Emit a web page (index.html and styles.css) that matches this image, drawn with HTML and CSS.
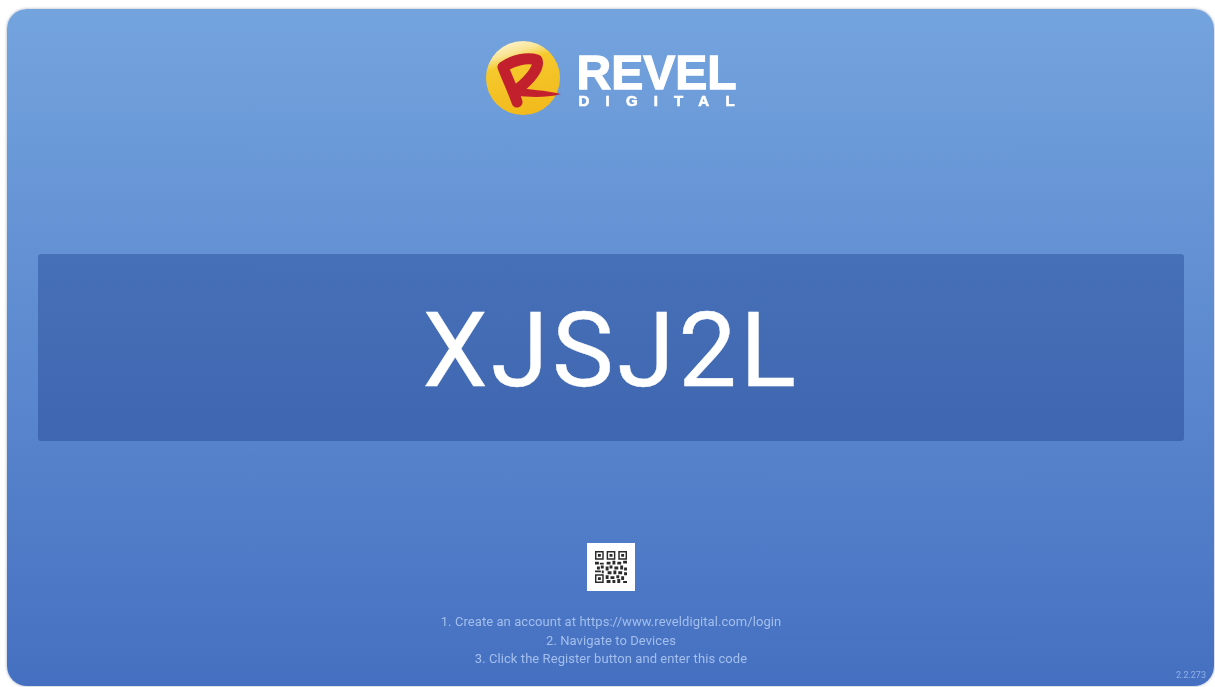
FILE: index.html
```html
<!DOCTYPE html>
<html lang="en">
<head>
  <meta charset="UTF-8">
  <meta name="viewport" content="width=device-width, initial-scale=1.0">
  <title>Revel Digital</title>
  <link rel="stylesheet" href="styles.css">
</head>
<body>
  <div class="screen">
    <div class="logo">
      <svg class="logo-mark" width="78" height="78" viewBox="0 0 78 78">
        <defs>
          <linearGradient id="ball" x1="0.3" y1="0" x2="0.6" y2="1">
            <stop offset="0" stop-color="#fdf3cc"/>
            <stop offset="0.16" stop-color="#f9e596"/>
            <stop offset="0.3" stop-color="#f5c92c"/>
            <stop offset="1" stop-color="#f2b91c"/>
          </linearGradient>
        </defs>
        <circle cx="38" cy="38" r="37" fill="url(#ball)"/>
        <path d="M32 62 C28 50 22 38 18 27 C28 20 42 17 52 20 C55 28 44 40 33 49" fill="none" stroke="#c3202e" stroke-width="11" stroke-linecap="round" stroke-linejoin="round"/>
        <path d="M30 47 C44 50 60 50 76 54 C62 58 44 57 32 56 Z" fill="#c3202e"/>
      </svg>
      <div class="logo-text">
        <div class="logo-name">REVEL</div>
        <div class="logo-sub">DIGITAL</div>
      </div>
    </div>

    <div class="code-band">
      <div class="code">XJSJ2L</div>
    </div>

    <div class="qr">
      <svg width="32" height="32" viewBox="0 0 33 33">
        <path fill="#2a2a2a" d="M0 0h9v9h-9zM12 0h9v9h-9zM24 0h9v9h-9zM0 24h9v9h-9z"/>
        <path fill="#fff" d="M1.500 1.500h6v6h-6zM13.500 1.500h6v6h-6zM25.500 1.500h6v6h-6zM1.500 25.500h6v6h-6z"/>
        <path fill="#2a2a2a" d="M3 3h3v3h-3zM15 3h3v3h-3zM27 3h3v3h-3zM3 27h3v3h-3z"/>
        <path fill="#2a2a2a" d="M0 11h4v3h-4zM5 12h4v2h-4zM2 16h3v3h-3zM6 15h3v3h-3zM0 20h6v2h-6zM7 20h2v3h-2zM12 11h4v3h-4zM18 10h3v4h-3zM11 16h3v4h-3zM15 15h3v3h-3zM23 11h4v3h-4zM29 10h4v3h-4zM20 16h4v3h-4zM26 15h3v4h-3zM30 17h3v3h-3zM13 21h4v3h-4zM19 20h3v4h-3zM24 21h4v3h-4zM30 22h3v3h-3zM11 25h3v4h-3zM16 26h4v3h-4zM22 25h3v3h-3zM27 26h3v4h-3zM12 30h4v3h-4zM18 30h3v3h-3zM23 29h3v4h-3zM29 31h4v2h-4z"/>
      </svg>
    </div>

    <div class="steps">
      <div>1. Create an account at https://www.reveldigital.com/login</div>
      <div>2. Navigate to Devices</div>
      <div>3. Click the Register button and enter this code</div>
    </div>

    <div class="version">2.2.273</div>
  </div>
</body>
</html>
```

FILE: styles.css
```css
html, body {
  height: 100%;
}
body {
  margin: 0;
  padding: 9px 1px 1px 7px;
  box-sizing: border-box;
  background-color: white;
  font-family: Roboto, "Liberation Sans", sans-serif;
  overflow: hidden;
}
.screen {
  position: relative;
  height: 100%;
  box-sizing: border-box;
  padding: 31px 30px 0 31px;
  display: flex;
  flex-direction: column;
  align-items: center;
  border-radius: 20px;
  background: linear-gradient(to bottom, #74a4de, #4570c1);
  box-shadow: 0 0 3px rgba(60, 80, 120, 0.5);
}
.logo {
  display: flex;
  align-items: center;
  gap: 13px;
  height: 78px;
}
.logo-text {
  color: white;
  font-family: "Liberation Sans", Arial, sans-serif;
  font-weight: bold;
  margin-top: 4px;
  filter: blur(0.5px);
}
.logo-name {
  font-size: 48px;
  line-height: 40px;
  -webkit-text-stroke: 1.3px white;
  white-space: nowrap;
}
.logo-sub {
  font-size: 15px;
  line-height: 16px;
  letter-spacing: 16.2px;
  margin-left: 2px;
  margin-right: -16px;
  white-space: nowrap;
  -webkit-text-stroke: 0.6px white;
}
.code-band {
  align-self: stretch;
  height: 187px;
  margin-top: 136px;
  display: flex;
  align-items: center;
  justify-content: center;
  background: linear-gradient(to bottom, #4670b8, #3f67b1);
  border-radius: 3px;
}
.code {
  color: white;
  font-size: 104px;
  letter-spacing: 3.5px;
  line-height: 1;
  -webkit-text-stroke: 0.4px white;
  margin-top: 6px;
  filter: blur(0.4px);
}
.qr {
  width: 48px;
  height: 48px;
  margin-top: 102px;
  display: flex;
  align-items: center;
  justify-content: center;
  background-color: white;
  filter: blur(0.6px);
}
.steps {
  margin-top: 22px;
  color: #a3bfec;
  font-size: 13px;
  letter-spacing: 0.07px;
  line-height: 18.5px;
  text-align: center;
  filter: blur(0.6px);
}
.version {
  position: absolute;
  right: 8px;
  bottom: 6px;
  color: #8fb0e6;
  font-size: 9px;
  filter: blur(0.4px);
}
```
